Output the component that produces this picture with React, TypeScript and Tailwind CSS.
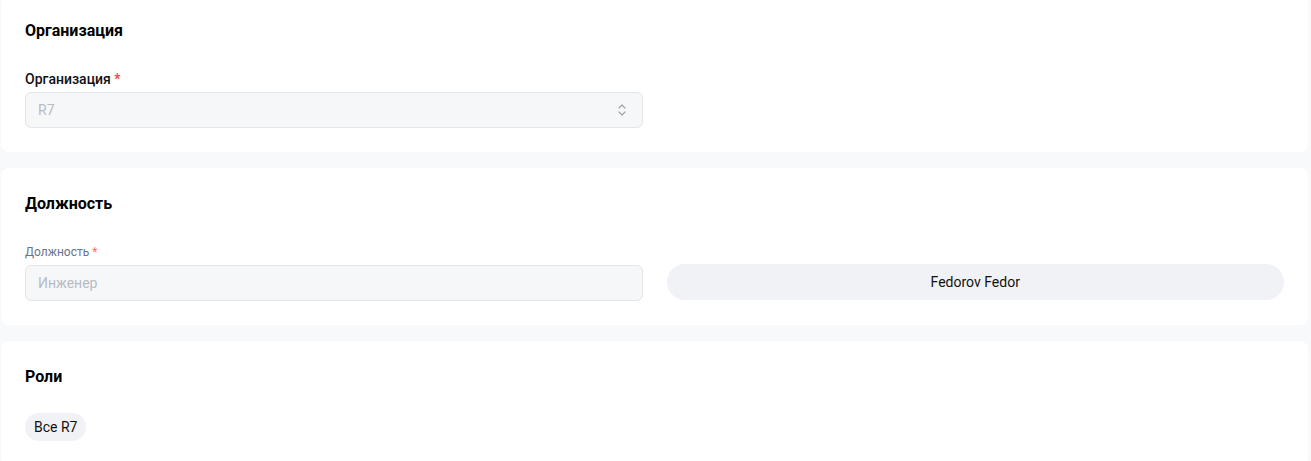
import React from "react";

function Card({ title, children, gap = "mt-7" }: { title: string; children: React.ReactNode; gap?: string }) {
  return (
    <div className="bg-white rounded-lg px-6 pt-6 pb-6">
      <h2 className="text-base leading-6 font-bold text-black">{title}</h2>
      <div className={gap}>{children}</div>
    </div>
  );
}

export default function App() {
  return (
    <div
      className="bg-[#f8f9fa] min-h-[461px] pl-px pr-[3px] -mt-[5px] flex flex-col gap-4"
      style={{ fontFamily: "Roboto, 'Liberation Sans', sans-serif" }}
    >
      <Card title="Организация">
        <div className="grid grid-cols-2 gap-6">
          <div>
            <div className="text-sm leading-4 font-medium text-[#111] mb-[5px]">
              Организация <span className="text-[#ef4444]">*</span>
            </div>
            <div className="h-9 rounded-md border border-[#e3e5e9] bg-[#f6f7f9] flex items-center justify-between px-3">
              <span className="text-sm text-[#b8bcc4]">R7</span>
              <svg width="10" height="14" viewBox="0 0 10 14" fill="none" stroke="#9ca3af" strokeWidth="1.2" strokeLinecap="round" strokeLinejoin="round" className="mr-[3px]">
                <path d="M2 5 L5 2 L8 5" />
                <path d="M2 9 L5 12 L8 9" />
              </svg>
            </div>
          </div>
          <div />
        </div>
      </Card>
      <Card title="Должность">
        <div className="grid grid-cols-2 gap-6 items-end">
          <div>
            <div className="text-xs leading-4 text-[#6b7388] mb-[5px]">
              Должность<span className="text-[#f87171] ml-[3px]">*</span>
            </div>
            <div className="h-9 rounded-md border border-[#e3e5e9] bg-[#f6f7f9] flex items-center px-3">
              <span className="text-sm text-[#b8bcc4]">Инженер</span>
            </div>
          </div>
          <button className="h-9 mb-px rounded-full bg-[#f1f2f6] text-sm text-[#111] flex items-center justify-center">
            Fedorov Fedor
          </button>
        </div>
      </Card>
      <Card title="Роли" gap="mt-6">
        <div className="flex">
          <span className="h-7 px-[9px] rounded-full bg-[#f1f2f6] text-sm text-[#111] flex items-center">Все R7</span>
        </div>
      </Card>
    </div>
  );
}
